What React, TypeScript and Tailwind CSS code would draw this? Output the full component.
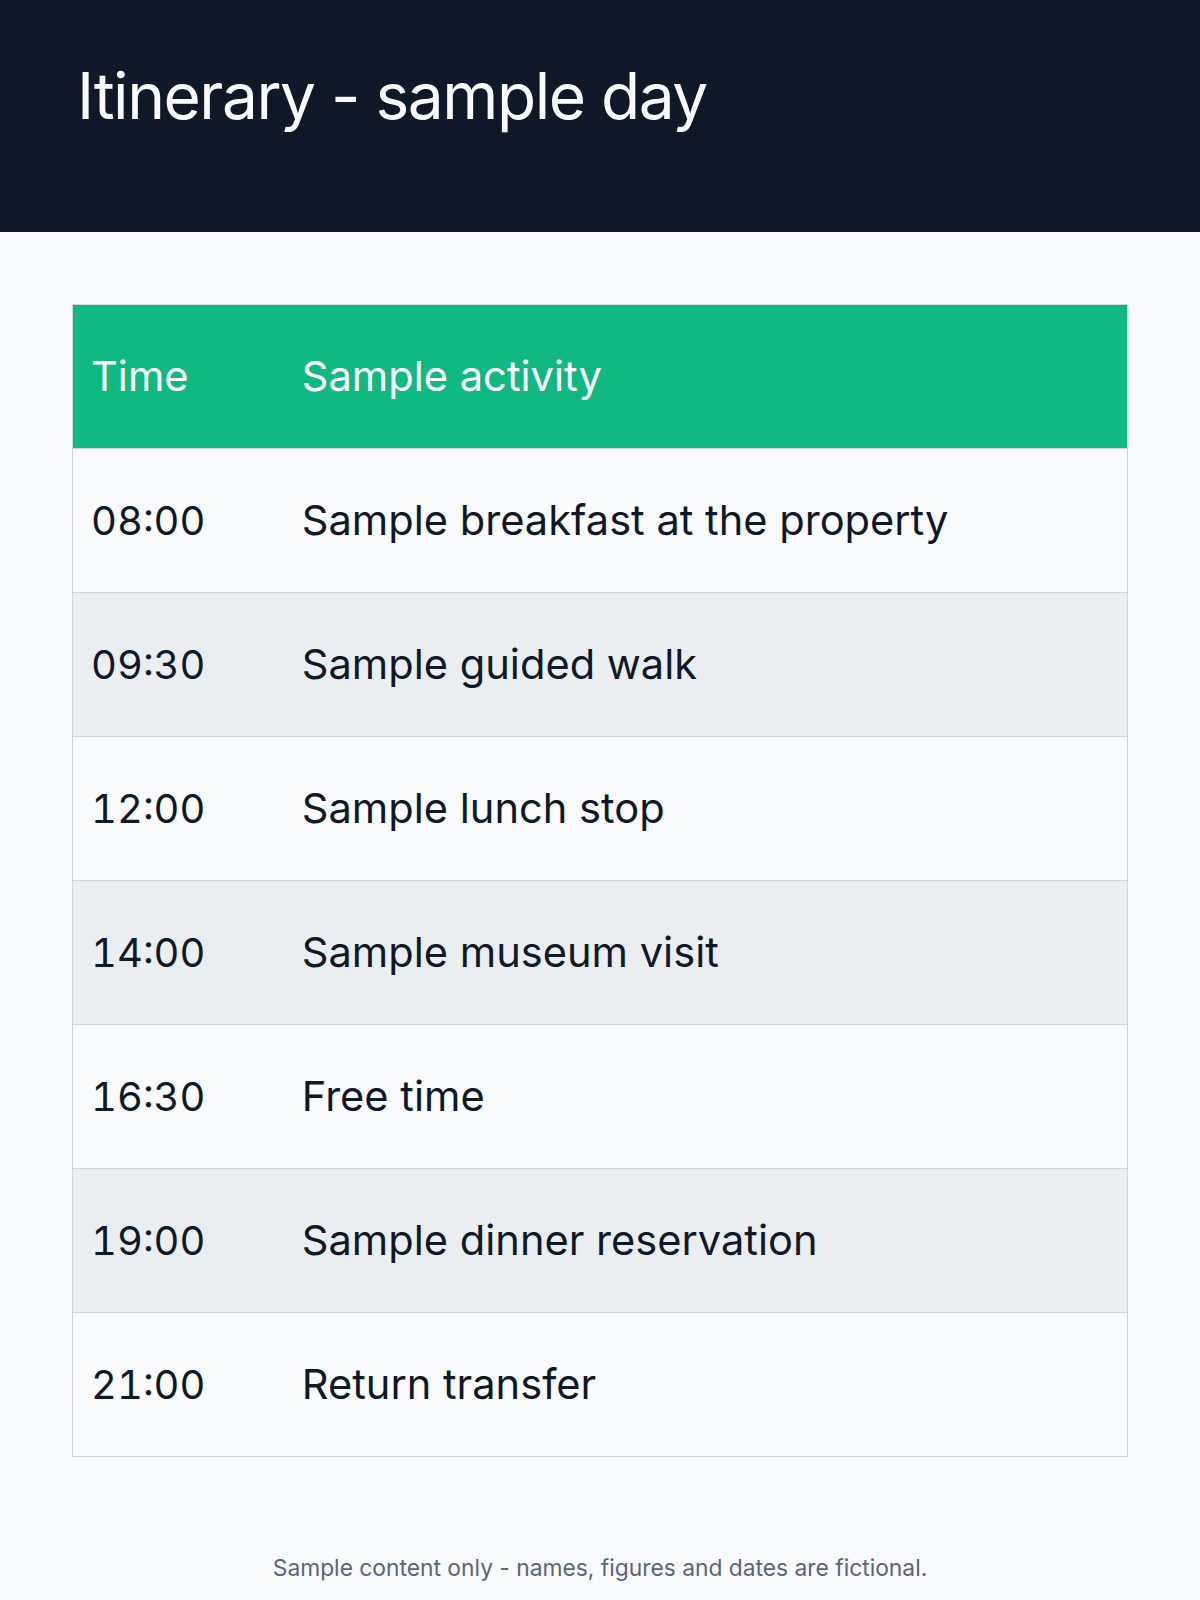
import React from 'react';

interface Stop {
  time: string;
  activity: string;
}

const stops: Stop[] = [
  { time: '08:00', activity: 'Sample breakfast at the property' },
  { time: '09:30', activity: 'Sample guided walk' },
  { time: '12:00', activity: 'Sample lunch stop' },
  { time: '14:00', activity: 'Sample museum visit' },
  { time: '16:30', activity: 'Free time' },
  { time: '19:00', activity: 'Sample dinner reservation' },
  { time: '21:00', activity: 'Return transfer' },
];

export default function App() {
  return (
    <div className="min-h-[1600px] bg-[#f8fafc] font-['Inter','Liberation_Sans',sans-serif] text-[#111827]">
      <header className="h-[232px] bg-[#111827] pl-[77px] pr-[72px] pt-16">
        <h1 className="text-[64px] leading-none font-normal tracking-[-0.023em] text-[#f9fafb]">
          Itinerary - sample day
        </h1>
      </header>

      <main className="px-[72px] pt-[72px]">
        <div className="border border-[#d1d5db] text-[41.6px]">
          <div className="flex h-[143px] items-center bg-[#10b981] text-white">
            <div className="w-[20%] px-[18px]">Time</div>
            <div className="flex-1 px-[18px]">Sample activity</div>
          </div>
          {stops.map((s, i) => (
            <div
              key={s.time}
              className={`flex h-[144px] items-center border-t border-[#d1d5db] ${
                i % 2 === 1 ? 'bg-[#eaeef1]' : 'bg-[#f8fafc]'
              }`}
            >
              <div className="w-[20%] px-[18px] text-[40px] tabular-nums">{s.time}</div>
              <div className="flex-1 px-[18px]">{s.activity}</div>
            </div>
          ))}
        </div>
      </main>

      <footer className="mt-[94px] text-center text-[22.8px] leading-[33px] text-[#5b6577]">
        Sample content only - names, figures and dates are fictional.
      </footer>
    </div>
  );
}
